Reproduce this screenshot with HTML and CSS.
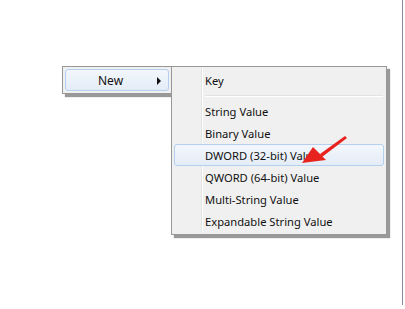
FILE: index.html
```html
<!DOCTYPE html>
<html lang="en">
<head>
    <meta charset="UTF-8">
    <title>Registry New Menu</title>
    <link rel="stylesheet" href="styles.css">
</head>
<body>
    <div class="screen">
        <div class="menus">
            <div class="menu parent-menu">
                <div class="menu-item active">
                    <span class="label">New</span>
                    <span class="arrow"></span>
                </div>
            </div>

            <div class="menu sub-menu">
                <div class="gutter"></div>
                <div class="menu-item">Key</div>
                <div class="separator"></div>
                <div class="menu-item">String Value</div>
                <div class="menu-item">Binary Value</div>
                <div class="menu-item active">DWORD (32-bit) Value</div>
                <div class="menu-item">QWORD (64-bit) Value</div>
                <div class="menu-item">Multi-String Value</div>
                <div class="menu-item">Expandable String Value</div>

                <svg class="pointer" width="60" height="40" viewBox="0 0 60 40">
                    <path d="M45 1 L47 3 L22 22 L20 19 Z" fill="#e8231f"/>
                    <path d="M2 28 L13 12 L26 25 Z" fill="#e8231f"/>
                </svg>
            </div>
        </div>
    </div>
</body>
</html>
```

FILE: styles.css
```css
* {
    margin: 0;
    padding: 0;
    box-sizing: border-box;
}

body {
    background: #fff;
    font-family: 'Noto Sans', 'Open Sans', sans-serif;
    font-size: 11.2px;
    color: #111;
}

.screen {
    width: 403px;
    height: 305px;
    border-right: 1px solid #8d8799;
    padding: 66px 0 0 62px;
}

.menus {
    display: flex;
    align-items: flex-start;
}

.menu {
    background: #f0f0f0;
    border: 1px solid #979797;
    padding: 2px;
    box-shadow: 3px 3px 1px rgba(0, 0, 0, 0.4);
}

.parent-menu {
    width: 110px;
}

.sub-menu {
    position: relative;
    width: 216px;
    margin-left: -1px;
}

.menu-item {
    position: relative;
    height: 22px;
    line-height: 20px;
    padding: 1px 0 0 30px;
    border: 1px solid transparent;
    border-radius: 3px;
    white-space: nowrap;
}

.menu-item.active {
    border-color: #b3d0f0;
    background: linear-gradient(#f3f7fc, #e4ecf7);
}

.parent-menu .menu-item {
    display: flex;
    align-items: center;
    justify-content: space-between;
    padding-left: 32px;
    padding-right: 7px;
    font-size: 12px;
}

.arrow {
    width: 0;
    height: 0;
    border-top: 4px solid transparent;
    border-bottom: 4px solid transparent;
    border-left: 4px solid #111;
}

.gutter {
    position: absolute;
    top: 1px;
    bottom: 1px;
    left: 29px;
    width: 2px;
    border-left: 1px solid #e2e3e3;
    border-right: 1px solid #fff;
}

.separator {
    height: 2px;
    margin: 4px 1px 3px 31px;
    border-top: 1px solid #e2e3e3;
    border-bottom: 1px solid #fff;
}

.pointer {
    position: absolute;
    left: 128px;
    top: 68px;
}
```
